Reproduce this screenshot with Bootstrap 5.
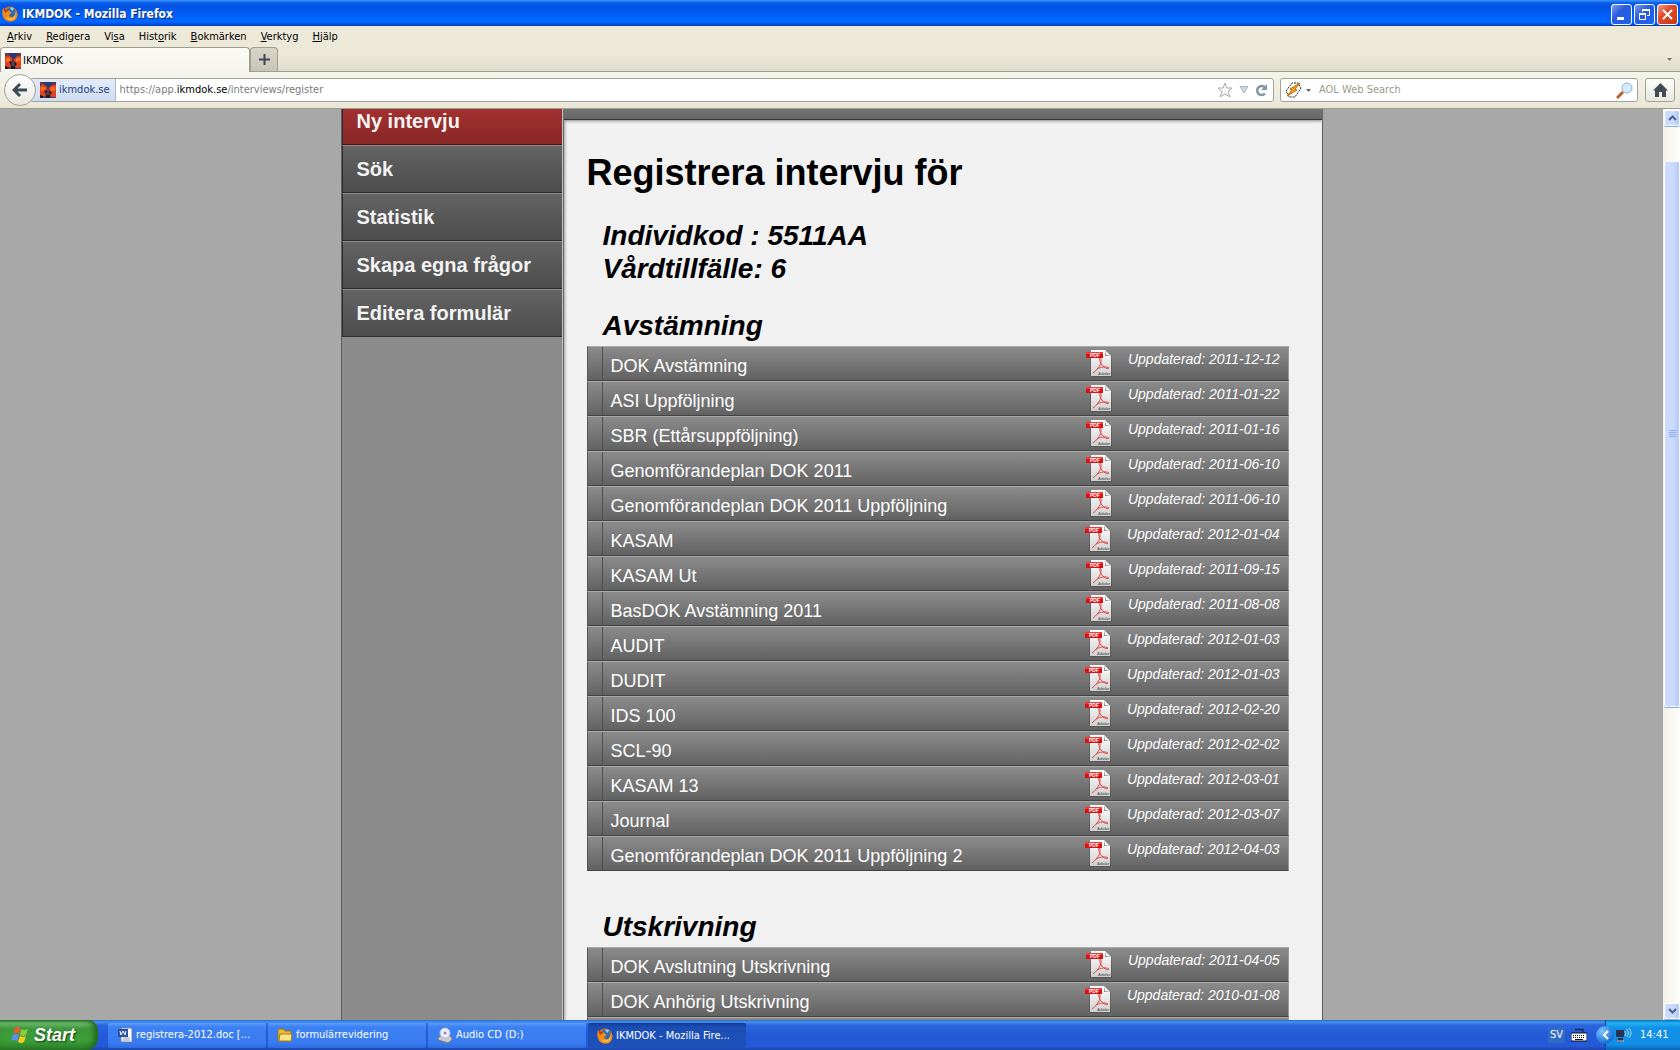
<!DOCTYPE html>
<html lang="sv">
<head>
<meta charset="utf-8">
<meta name="viewport" content="width=device-width, initial-scale=1">
<title>IKMDOK</title>
<link href="https://cdn.jsdelivr.net/npm/bootstrap@5.3.0/dist/css/bootstrap.min.css" rel="stylesheet">
<style>
body{font-family:"DejaVu Sans Condensed","Noto Sans",sans-serif;font-size:11px;line-height:14px;color:#000;background:#a8a8a8}
a{color:inherit;text-decoration:none}
svg{display:block;flex:none}
button{border:0;padding:0;font:inherit;color:inherit;background:none}
.titlebar{height:26px;padding:2px 2px 0;background:linear-gradient(#3a95ff 0,#0a5ce8 3px,#0053e1 7px,#0061fc 16px,#0068ff 22px,#0047d6 25px,#0036bd 26px);color:#fff;font-weight:700;font-size:12px;text-shadow:1px 1px 0 #0a2a7a}
.tight{column-gap:2px}
.winbtn{width:21px;height:21px;border:1px solid #fff;border-radius:3px;background:linear-gradient(135deg,#7d9ff2,#2a5be0 40%,#1e62ee);display:flex;align-items:center;justify-content:center}
.winbtn.shut{background:linear-gradient(135deg,#f0a080,#e2492b 40%,#c63a12)}
.menus{height:21px;padding:4px 7px 0;column-gap:14px;background:#ece9d8}
.tabs{height:25px;background:linear-gradient(#ece9d8 8px,#dfdccb);border-bottom:1px solid #9f9d8c}
.tab-on{width:250px;height:25px;border:1px solid #9f9d8c;border-bottom:0;border-radius:4px 4px 0 0;background:linear-gradient(#fbfaf7,#f5f4ec);padding:2px 4px 0;column-gap:2px}
.tab-new{width:28px;height:24px;border:1px solid #9f9d8c;border-bottom:0;border-radius:4px 4px 0 0;background:linear-gradient(#d8d5c6,#c8c5b6)}
.toolbar{height:37px;padding:0 5px 0 4px;background:linear-gradient(#f5f4ec,#e9e6d5);border-bottom:1px solid #a09e8e}
.back{width:32px;height:32px;border:1px solid #a3a196;border-radius:50%;background:linear-gradient(#fff,#e8e6dd);z-index:2}
.urlbar,.find{height:24px;background:#fff;border:1px solid #a3a19a;border-radius:3px}
.urlbar{margin-left:-6px;overflow:hidden}
.ident{height:22px;padding:0 5px 0 9px;column-gap:3px;background:linear-gradient(#e2ebf8,#cfdcf0);border-right:1px solid #a9b9d4;color:#1d3f80}
.urlicons{column-gap:6px;padding-right:5px}
.find{width:358px;margin:0 7px 0 6px}
.find input{border:0;outline:0;background:none;font:inherit;color:#000}
.find input::placeholder{color:#9c9a8b;opacity:1}
.homebtn{width:30px;height:24px;border:1px solid #a3a19a;border-radius:3px;background:linear-gradient(#fdfdfb,#e8e6de)}
.grey{color:#7b7b7b}
.view{min-height:0;overflow:hidden}
.site{width:982px;margin:-12px auto 0;font-family:"Liberation Sans",sans-serif;border-left:1px solid #5e5e5e;border-right:1px solid #5e5e5e}
.side{width:221px;background:#8b8b8b;border-right:1px solid #c4c4c4}
.side a{display:block;height:48px;padding:0 14px;line-height:46px;font-size:20px;font-weight:700;color:#f3f3f3;background:linear-gradient(#646464,#4d4d4d);border-top:1px solid #8d8d8d;border-bottom:1px solid #2c2c2c;border-left:1px solid #2c2c2c}
.side a.now{background:linear-gradient(#ab3434,#882626);border-bottom-color:#4a1010}
.main{background:#f1f1f1;border-left:1px solid #666;box-shadow:inset 3px 0 3px -2px #999}
.strip{height:23px;background:linear-gradient(#858585,#666);border-bottom:1px solid #333;box-shadow:0 1px 3px #888}
.inner{padding:33px 33px 0 23px}
h1{font-size:36px;line-height:40px;font-weight:700;margin:0 0 26px}
h2{font-size:28px;line-height:33px;font-weight:700;font-style:italic;margin:0;padding-left:16px}
.forms{list-style:none;margin:4px 0 39px;padding:0}
.forms li{display:flex;height:35px;background:linear-gradient(#8b8b8b,#626262);border-top:1px solid #aaa;border-bottom:1px solid #444;border-left:1px solid #555;border-right:1px solid #999;padding-right:8px;color:#fff}
.forms a{flex:1;margin-left:14px;border-left:1px solid #4f4f4f;padding-left:8px;font-size:18px;line-height:38px}
.forms em{font-size:14px;line-height:24px;margin-left:15px}
.forms svg{margin-top:2px}
.scroller{width:17px;background:linear-gradient(90deg,#f2f0e8,#fefefb);padding:1px 0 1px 1px}
.scroller button{width:16px;background:linear-gradient(90deg,#cbdafd 60%,#b2c8f9);border:1px solid #fff;box-shadow:0 1px 0 #86a8e8;border-radius:2px;display:flex;align-items:center;justify-content:center}
.scroller .end{height:16px}
.thumb{height:546px;margin-top:35px}
.taskbar{height:30px;background:linear-gradient(#2a66c4 0,#4493ea 2px,#2b67e0 5px,#2359d6 15px,#245bdb 26px,#1c44a8);color:#fff}
.start{width:98px;height:30px;padding-left:11px;border-radius:0 10px 12px 0;background:linear-gradient(#2f7a2f,#6fb96c 3px,#3c963b 9px,#3aa037 20px,#2c7f2b);box-shadow:inset -4px 0 5px #21681f;font-family:"Liberation Sans",sans-serif;font-size:18px;font-weight:700;font-style:italic;text-shadow:1px 1px 2px #123e12}
.tasks{column-gap:2px;padding-left:10px}
.task{width:158px;height:25px;padding:0 9px;column-gap:3px;border-radius:2px;background:linear-gradient(#5f9dfa,#3c81f3 4px,#387bf0 20px,#2f6be0);white-space:nowrap}
.task.now{background:linear-gradient(#123a94,#1b4db5 4px,#1e52bb);padding-top:2px}
.lang{background:#316ac5;padding:1px 2px}
.keys{margin:0 18px 0 6px}
.tray{width:75px;height:30px;background:linear-gradient(#0c70c4,#1fb2f2 3px,#1290e8 8px,#1290e8 24px,#0c66b8);border-left:1px solid #0b3f8e}
.arrow{width:18px;height:18px;flex:none;border-radius:50%;margin-left:-10px;background:radial-gradient(circle at 35% 30%,#7cc8ff,#1a6fd8 70%)}
</style>
</head>
<body class="vh-100 overflow-hidden d-flex flex-column">
<svg width="0" height="0" class="position-absolute">
<defs>
<linearGradient id="paper" x2="0" y2="1"><stop stop-color="#fff"/><stop offset="1" stop-color="#cfcfcf"/></linearGradient>
<symbol id="pdf" viewBox="0 0 28 28">
<path d="M5 2h17l5 6v20H5z" fill="#333" opacity=".3"/><path d="M6 1h14l6 6v20H6z" fill="url(#paper)"/><path d="M20 1v6h6z" fill="#8f8f8f"/><path d="M20 1l1 5 5 1z" fill="#f4f4f4"/>
<path d="M15 9c2 0 1 5 0 7s-4 6-7 8M15 9c-1 2 1 7 4 9s4 2 5 1c-3-2-8-1-12 1" fill="none" stroke="#e04848"/>
<path d="M1 3h17v6H1z" fill="#d81212"/><path d="M1 3h17v2H1z" fill="#ee3a3a"/>
<text x="5" y="8" font-size="5" font-weight="700" fill="#fff">PDF</text><text x="13" y="26" font-size="4" font-weight="700" fill="#666">Adobe</text>
</symbol>
<symbol id="fox" viewBox="0 0 16 16"><circle cx="8" cy="8" r="7.500" fill="#e66a12"/><circle cx="9" cy="6.500" r="5" fill="#2b6bb5"/><path d="M8 2c2-1 4 0 4 1l-2 2z" fill="#8fd0f2"/><path d="M1 2l3 2 3 0 1 2 2 1-3 2c1 3 5 3 7 0 1-2 0-5-1-6 3 3 3 7 1 10-3 4-10 3-12-1C0 9 0 5 1 2z" fill="#ee8a1c"/><path d="M12 4c2 3 1 7-2 8s-5 0-6-2c0 3 3 5 6 4 4-1 5-7 2-10z" fill="#fbc63c"/><path d="M1 2l3 2 3 0-4 3z" fill="#b93c08"/></symbol>
<symbol id="fav" viewBox="0 0 16 16"><path d="M0 0h16v16H0z" fill="#5a3a4c"/><path d="M3 0h10l-2 4-2 2-3-2z" fill="#2b3a7a"/><path d="M0 4l3-2 4 3 0 4-2 2 1 3H1L0 12zM16 3l-4 0-3 3 0 3 2 2-1 3 3 1h3z" fill="#e2431b"/><path d="M1 5l4 0 0 3-4 1zM11 5l4 0v3l-4 1z" fill="#f5722d"/><path d="M4 9l3-1-1 4zM9 8l3 3-2 2zM0 13l3 1v2H0zM6 13h4v3H6z" fill="#1b1a2c"/></symbol>
</defs>
</svg>

<header>
<div class="titlebar d-flex align-items-center">
<svg width="16" height="16"><use href="#fox"/></svg><span class="ms-1 flex-grow-1">IKMDOK - Mozilla Firefox</span>
<div class="d-flex tight">
<button class="winbtn" aria-label="Minimera"><svg width="13" height="13"><path d="M2 9h7v3H2z" fill="#fff"/></svg></button>
<button class="winbtn" aria-label="Återställ"><svg width="13" height="13" fill="none" stroke="#fff"><path d="M4.500 4V1.500h7v6H9M1.500 5.500h6v6h-6z"/><path d="M4 2h8M1 6h7" stroke-width="2"/></svg></button>
<button class="winbtn shut" aria-label="Stäng"><svg width="13" height="13"><path d="M2 2l9 9M11 2l-9 9" stroke="#fff" stroke-width="2"/></svg></button>
</div>
</div>
<nav class="menus d-flex">
<a href="#"><u>A</u>rkiv</a><a href="#"><u>R</u>edigera</a><a href="#">Vi<u>s</u>a</a><a href="#">Hist<u>o</u>rik</a><a href="#"><u>B</u>okmärken</a><a href="#"><u>V</u>erktyg</a><a href="#"><u>H</u>jälp</a>
</nav>
<div class="tabs d-flex">
<a href="#" class="tab-on d-flex align-items-center"><svg width="16" height="16"><use href="#fav"/></svg>IKMDOK</a>
<button class="tab-new d-flex align-items-center justify-content-center" aria-label="Ny flik"><svg width="11" height="11"><path d="M5.500 0v11M0 5.500h11" stroke="#3b4652" stroke-width="2"/></svg></button>
<button class="ms-auto me-2" aria-label="Visa flikar"><svg width="5" height="3"><path d="M0 0h5L2.500 3z" fill="#777"/></svg></button>
</div>
<div class="toolbar d-flex align-items-center">
<button class="back d-flex align-items-center justify-content-center" aria-label="Bakåt"><svg width="16" height="16"><path d="M8 2L2 8l6 6M2 8h13" fill="none" stroke="#3d4a57" stroke-width="3"/></svg></button>
<div class="urlbar flex-grow-1 d-flex align-items-center">
<div class="ident d-flex align-items-center"><svg width="16" height="16"><use href="#fav"/></svg>ikmdok.se</div>
<span class="ms-1 grey flex-grow-1">https://app.<span class="text-black">ikmdok.se</span>/interviews/register</span>
<div class="urlicons d-flex align-items-center">
<svg width="16" height="16"><path d="M8 1l2 5 5 0-4 4 2 5-5-3-5 3 2-5-4-4 5 0z" fill="#f6f6f6" stroke="#aaa"/></svg>
<svg width="10" height="8"><path d="M1 .5h8L5 7z" fill="#d4dbe2" stroke="#a9b3bd"/></svg>
<svg width="13" height="13"><path d="M10 3.500a4.500 4.500 0 1 0 0 6" fill="none" stroke="#8497a6" stroke-width="2.500"/><path d="M12 0v6H6z" fill="#8497a6"/></svg>
</div>
</div>
<form class="find d-flex align-items-center px-1">
<svg width="17" height="16"><path d="M1 9l6-8h6l3 5-6 9H4z" fill="#fff" stroke="#222" stroke-dasharray="2 1"/><path d="M15 1L5 7l2 1-5 6 10-6-2-1z" fill="#f8a51c" stroke="#b96a08"/></svg>
<svg class="mx-1" width="5" height="3"><path d="M0 0h5L2.500 3z" fill="#666"/></svg>
<input class="flex-grow-1 ms-1 p-0" type="text" aria-label="Sök på webben" placeholder="AOL Web Search">
<button type="button" aria-label="Sök"><svg width="17" height="17"><path d="M1 16l6-6" stroke="#b5622f" stroke-width="3"/><circle cx="11" cy="6" r="5" fill="#d5ecfc" stroke="#8fb4d8"/></svg></button>
</form>
<button class="homebtn d-flex align-items-center justify-content-center" aria-label="Startsida"><svg width="15" height="14"><path d="M7.500 0L15 7.500h-2V14H9V9H6v5H2V7.500H0z" fill="#434c56"/></svg></button>
</div>
</header>

<div class="view flex-grow-1 d-flex">
<div class="flex-grow-1">
<div class="site d-flex">
<nav class="side">
<a href="#" class="now">Ny intervju</a><a href="#">Sök</a><a href="#">Statistik</a><a href="#">Skapa egna frågor</a><a href="#">Editera formulär</a>
</nav>
<main class="main flex-grow-1">
<div class="strip"></div>
<div class="inner">
<h1>Registrera intervju för</h1>
<h2>Individkod : 5511AA<br>Vårdtillfälle: 6</h2>
<h2 class="mt-4">Avstämning</h2>
<ul class="forms">
<li><a href="#">DOK Avstämning</a><svg width="28" height="28"><use href="#pdf"/></svg><em>Uppdaterad: 2011-12-12</em></li>
<li><a href="#">ASI Uppföljning</a><svg width="28" height="28"><use href="#pdf"/></svg><em>Uppdaterad: 2011-01-22</em></li>
<li><a href="#">SBR (Ettårsuppföljning)</a><svg width="28" height="28"><use href="#pdf"/></svg><em>Uppdaterad: 2011-01-16</em></li>
<li><a href="#">Genomförandeplan DOK 2011</a><svg width="28" height="28"><use href="#pdf"/></svg><em>Uppdaterad: 2011-06-10</em></li>
<li><a href="#">Genomförandeplan DOK 2011 Uppföljning</a><svg width="28" height="28"><use href="#pdf"/></svg><em>Uppdaterad: 2011-06-10</em></li>
<li><a href="#">KASAM</a><svg width="28" height="28"><use href="#pdf"/></svg><em>Uppdaterad: 2012-01-04</em></li>
<li><a href="#">KASAM Ut</a><svg width="28" height="28"><use href="#pdf"/></svg><em>Uppdaterad: 2011-09-15</em></li>
<li><a href="#">BasDOK Avstämning 2011</a><svg width="28" height="28"><use href="#pdf"/></svg><em>Uppdaterad: 2011-08-08</em></li>
<li><a href="#">AUDIT</a><svg width="28" height="28"><use href="#pdf"/></svg><em>Uppdaterad: 2012-01-03</em></li>
<li><a href="#">DUDIT</a><svg width="28" height="28"><use href="#pdf"/></svg><em>Uppdaterad: 2012-01-03</em></li>
<li><a href="#">IDS 100</a><svg width="28" height="28"><use href="#pdf"/></svg><em>Uppdaterad: 2012-02-20</em></li>
<li><a href="#">SCL-90</a><svg width="28" height="28"><use href="#pdf"/></svg><em>Uppdaterad: 2012-02-02</em></li>
<li><a href="#">KASAM 13</a><svg width="28" height="28"><use href="#pdf"/></svg><em>Uppdaterad: 2012-03-01</em></li>
<li><a href="#">Journal</a><svg width="28" height="28"><use href="#pdf"/></svg><em>Uppdaterad: 2012-03-07</em></li>
<li><a href="#">Genomförandeplan DOK 2011 Uppföljning 2</a><svg width="28" height="28"><use href="#pdf"/></svg><em>Uppdaterad: 2012-04-03</em></li>
</ul>
<h2>Utskrivning</h2>
<ul class="forms">
<li><a href="#">DOK Avslutning Utskrivning</a><svg width="28" height="28"><use href="#pdf"/></svg><em>Uppdaterad: 2011-04-05</em></li>
<li><a href="#">DOK Anhörig Utskrivning</a><svg width="28" height="28"><use href="#pdf"/></svg><em>Uppdaterad: 2010-01-08</em></li>
<li></li>
</ul>
</div>
</main>
</div>
</div>
<div class="scroller d-flex flex-column">
<button class="end" aria-label="Upp"><svg width="9" height="6"><path d="M1 5l3.500-3.500L8 5" fill="none" stroke="#4d6185" stroke-width="2"/></svg></button>
<button class="thumb" aria-label="Rullningslist"><svg width="7" height="8"><path d="M0 .5h7M0 2.500h7M0 4.500h7M0 6.500h7" stroke="#8cb0f8"/></svg></button>
<button class="end mt-auto" aria-label="Ned"><svg width="9" height="6"><path d="M1 1l3.500 3.500L8 1" fill="none" stroke="#4d6185" stroke-width="2"/></svg></button>
</div>
</div>

<footer class="taskbar d-flex align-items-center">
<button class="start d-flex align-items-center gap-1"><svg width="19" height="18"><path d="M4 2q3-2 5 0l-1 6q-3-2-6 0z" fill="#ee5a2c"/><path d="M10 3q3 2 7 0l-2 6q-3 2-6 0z" fill="#8ccc3a"/><path d="M2 9q3-2 6 0l-2 6q-3-2-6 0z" fill="#5b8df0"/><path d="M9 10q3 2 6 0l-2 6q-3 2-6 0z" fill="#fbc822"/></svg>Start</button>
<div class="tasks d-flex flex-grow-1">
<button class="task d-flex align-items-center"><svg width="16" height="16"><path d="M4 1h11v14H4z" fill="#fff" stroke="#6a7fb0"/><path d="M6 11h7M6 13h7" stroke="#8b9ac0"/><path d="M1 2h10v8H1z" fill="#2b52a0"/><path d="M3 4l1 4 2-4 2 4 1-4" fill="none" stroke="#fff"/></svg>registrera-2012.doc [...</button>
<button class="task d-flex align-items-center"><svg width="16" height="16"><path d="M1 3l1-1h5l1 2h6v10H1z" fill="#e9b93c" stroke="#9b7412"/><path d="M3 7h12l-1 7H2z" fill="#fbe486" stroke="#a57d1a"/></svg>formulärrevidering</button>
<button class="task d-flex align-items-center"><svg width="16" height="16"><path d="M1 11l4-3h7l3 3v2l-4 3-10-3z" fill="#c9c9c9" stroke="#777"/><circle cx="8" cy="6" r="5" fill="#eef" stroke="#bbd"/><circle cx="8" cy="6" r="1.500" fill="#88a"/></svg>Audio CD (D:)</button>
<button class="task now d-flex align-items-center"><svg width="16" height="16"><use href="#fox"/></svg>IKMDOK - Mozilla Fire...</button>
</div>
<span class="lang">SV</span>
<svg class="keys" width="16" height="14"><path d="M0 5h16v8H0z" fill="#fff" stroke="#111"/><path d="M2 7.500h12M2 9.500h12" stroke="#111" stroke-dasharray="1 1"/><path d="M4 11.500h8M4 1l2 1 2-1 2 1 2-1v3" fill="none" stroke="#111"/></svg>
<div class="tray d-flex align-items-center">
<button class="arrow d-flex align-items-center justify-content-center" aria-label="Visa dolda ikoner"><svg width="7" height="10"><path d="M6 1L2 5l4 4" fill="none" stroke="#fff" stroke-width="2"/></svg></button>
<svg width="18" height="16"><path d="M2 3h8v7H2zM4 11h5v4H3z" fill="#27344f"/><path d="M3 14h7" stroke="#ccd"/><path d="M11 4q2 2 0 5M13 2q3 4 0 8M15 1q4 5 0 10" fill="none" stroke="#b8d4ee"/></svg>
<span class="ms-1 ps-1">14:41</span>
</div>
</footer>
<script src="https://cdn.jsdelivr.net/npm/bootstrap@5.3.0/dist/js/bootstrap.bundle.min.js"></script>
</body>
</html>
